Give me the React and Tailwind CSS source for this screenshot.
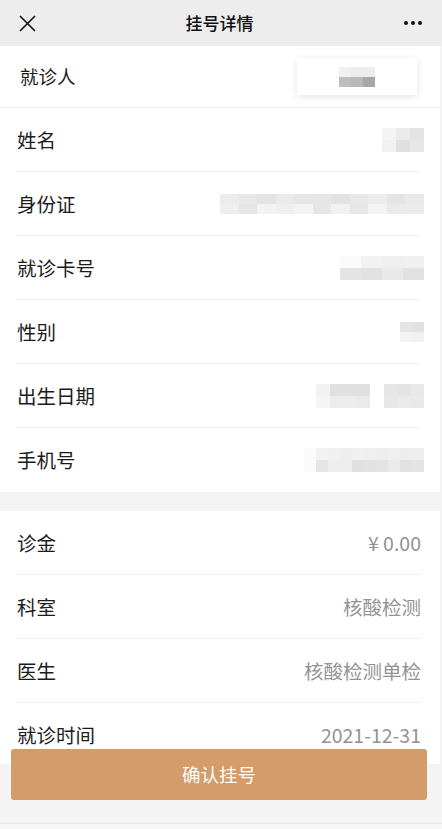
const FONT = '"Noto Sans CJK SC", "Noto Sans", sans-serif';

// blurred mosaic that hides personal data: [width, height, cells]
function Mosaic({ w, h, cells }) {
  return (
    <div className="flex flex-col blur-[0.6px]" style={{ width: w, height: h }}>
      {cells.map((row, i) => (
        <div key={i} className="flex flex-1">
          {row.map((c, j) => (
            <div key={j} className="flex-1" style={{ background: c }} />
          ))}
        </div>
      ))}
    </div>
  );
}

const patientRows = [
  {
    label: "姓名",
    mask: { w: 42, h: 24, cells: [["#f4f4f4", "#ebebeb", "#e4e4e4"], ["#f1f1f1", "#e0e0e0", "#e7e7e7"]] },
  },
  {
    label: "身份证",
    mask: {
      w: 204,
      h: 20,
      cells: [
        ["#ececec", "#e8e8e8", "#e3e3e3", "#eaeaea", "#e5e5e5", "#e6e6e6", "#e2e2e2", "#e8e8e8", "#ececec", "#e4e4e4", "#e9e9e9"],
        ["#eeeeee", "#e5e5e5", "#f2f2f2", "#efefef", "#f3f3f3", "#e6e6e6", "#f1f1f1", "#e7e7e7", "#f3f3f3", "#eaeaea", "#ebebeb"],
      ],
    },
  },
  {
    label: "就诊卡号",
    mask: { w: 84, h: 24, cells: [["#fafafa", "#f2f2f2", "#efefef", "#f0f0f0"], ["#e4e4e4", "#e2e2e2", "#e9e9e9", "#e1e1e1"]] },
  },
  {
    label: "性别",
    mask: { w: 24, h: 20, cells: [["#e4e4e4", "#e1e1e1"], ["#f3f3f3", "#f1f1f1"]] },
  },
  {
    label: "出生日期",
    mask: {
      w: 108,
      h: 24,
      cells: [["#f2f2f2", "#e0e0e0", "#e0e0e0", "#e0e0e0", "#ffffff", "#e6e6e6", "#e4e4e4", "#e8e8e8"], ["#f5f5f5", "#ececec", "#ececec", "#eaeaea", "#ffffff", "#e7e7e7", "#eaeaea", "#e9e9e9"]],
    },
  },
  {
    label: "手机号",
    mask: {
      w: 120,
      h: 24,
      cells: [["#fbfbfb", "#f2f2f2", "#f0f0f0", "#eeeeee", "#f0f0f0", "#efefef", "#eeeeee", "#efefef", "#ededed", "#eeeeee"], ["#fbfbfb", "#e5e5e5", "#eeeeee", "#eeeeee", "#e0e0e0", "#e2e2e2", "#e3e3e3", "#eaeaea", "#e1e1e1", "#e4e4e4"]],
    },
  },
];

const orderRows = [
  { label: "诊金", value: "¥ 0.00" },
  { label: "科室", value: "核酸检测" },
  { label: "医生", value: "核酸检测单检" },
  { label: "就诊时间", value: "2021-12-31" },
];

function Row({ label, last, children }) {
  return (
    <div className="pl-[17px] pr-[19px]">
      <div className={`flex h-16 items-center justify-between ${last ? "" : "border-b border-[#efefef]"}`}>
        <span className="text-[19.5px] leading-none text-[#1b1b1b]">{label}</span>
        {children}
      </div>
    </div>
  );
}

export default function App() {
  return (
    <div className="h-[829px] w-[442px] overflow-hidden bg-[#f4f4f4]" style={{ fontFamily: FONT }}>
      {/* Header */}
      <div className="flex h-[46px] items-center justify-between bg-[#ededed] px-[19px]">
        <svg width="17" height="17" viewBox="0 0 17 17" className="text-[#111]">
          <path d="M1 1L16 16M16 1L1 16" stroke="currentColor" strokeWidth="1.6" fill="none" />
        </svg>
        <span className="text-[17px] font-medium text-[#111]">挂号详情</span>
        <svg width="20" height="6" viewBox="0 0 20 6">
          <circle cx="3" cy="3" r="2" fill="#111" />
          <circle cx="10" cy="3" r="2" fill="#111" />
          <circle cx="17" cy="3" r="2" fill="#111" />
        </svg>
      </div>

      <div className="w-[440px] bg-white">
        {/* Patient selector */}
        <div className="flex h-[62px] items-center justify-between border-b border-[#efefef] pl-[20px] pr-[23px]">
          <span className="text-[18.5px] leading-none text-[#1b1b1b]">就诊人</span>
          <div className="flex h-[37px] w-[120px] items-center justify-center bg-white shadow-[0_2px_8px_rgba(0,0,0,0.10)]">
            <Mosaic w={36} h={20} cells={[["#f1f1f1", "#ececec", "#ededed"], ["#bdbdbd", "#b9b9b9", "#a7a7a7"]]} />
          </div>
        </div>

        {patientRows.map((r, i) => (
          <Row key={r.label} label={r.label} last={i === patientRows.length - 1}>
            <div className="-mr-[3px]">
              <Mosaic {...r.mask} />
            </div>
          </Row>
        ))}
      </div>

      <div className="h-[19px]" />

      <div className="w-[440px] bg-white">
        {orderRows.map((r, i) => (
          <Row key={r.label} label={r.label} last={i === orderRows.length - 1}>
            <span className="text-[19.5px] leading-none text-[#939393]">{r.value}</span>
          </Row>
        ))}
      </div>

      {/* Fixed footer */}
      <div className="fixed bottom-0 left-0 flex h-[65px] w-[442px] flex-col bg-[#f4f4f4]">
        <div className="-mt-[15px] px-[11px] pr-[15px]">
          <button className="flex h-[51px] w-full items-center justify-center rounded-[3px] bg-[#d49c6b] text-[18.5px] text-white">
            确认挂号
          </button>
        </div>
        <div className="flex-1" />
        <div className="h-[6px] border-t border-[#e8e8e8] bg-[#f7f7f7]" />
      </div>
    </div>
  );
}
